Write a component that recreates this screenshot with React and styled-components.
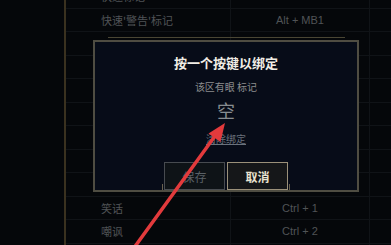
import React from 'react';
import styled, {createGlobalStyle} from 'styled-components';

const GlobalStyle = createGlobalStyle`
  html, body {
    margin: 0;
    padding: 0;
    background: #05070a;
  }
  body {
    font-family: "Noto Sans CJK SC", "Liberation Sans", sans-serif;
  }
`;

const Page = styled.div`
  position: relative;
  width: 391px;
  height: 245px;
  overflow: hidden;
  background: #05070a;
`;

const Table = styled.div`
  margin-top: -15px;
  margin-left: 64px;
  border-left: 2px solid #3a311f;
  height: 300px;
`;

const Row = styled.div`
  display: grid;
  grid-template-columns: 165px 139px 1fr;
  height: 23.5px;
  border-bottom: 1px solid #101317;
  box-sizing: border-box;
`;

const Cell = styled.div`
  display: flex;
  align-items: center;
  justify-content: ${(p) => (p.$center ? 'center' : 'flex-start')};
  padding-left: ${(p) => (p.$center ? '0' : '35px')};
  border-right: 1px solid #101317;
  font-family: ${(p) => (p.$center ? '"Liberation Sans", "Noto Sans CJK SC", sans-serif' : '"Noto Sans CJK SC", "Liberation Sans", sans-serif')};
  font-size: 11px;
  color: #505356;
  white-space: nowrap;
`;

const Modal = styled.div`
  position: absolute;
  left: 93px;
  top: 40px;
  width: 266px;
  height: 152px;
  box-sizing: border-box;
  border: 2px solid #4f4d42;
  background: #070c18;
  display: flex;
  flex-direction: column;
  align-items: center;
  padding-top: 13px;
  &::before {
    content: '';
    position: absolute;
    top: -5px;
    left: 13px;
    right: 12px;
    border-top: 1px solid #4a4634;
  }
`;

const Title = styled.div`
  font-size: 13px;
  line-height: 16px;
  font-weight: 700;
  color: #f1eee6;
`;

const Subtitle = styled.div`
  margin-top: 9px;
  font-size: 10px;
  line-height: 14px;
  color: #8c8d8e;
`;

const KeyValue = styled.div`
  margin-top: 5px;
  font-size: 18px;
  line-height: 22px;
  color: #878c90;
`;

const ClearLink = styled.div`
  margin-top: 11px;
  font-size: 10px;
  line-height: 14px;
  color: #6a727c;
  text-decoration: underline;
`;

const Tray = styled.div`
  position: relative;
  margin-top: auto;
  display: flex;
  gap: 2px;
  padding: 0 2px;
  &::before,
  &::after {
    content: '';
    position: absolute;
    bottom: 0;
    width: 1px;
    height: 6px;
    background: #6a6250;
  }
  &::before { left: 0; }
  &::after { right: 0; }
`;

const Button = styled.div`
  width: 61px;
  height: 28px;
  box-sizing: border-box;
  display: flex;
  align-items: center;
  justify-content: center;
  font-size: 12px;
  font-weight: ${(p) => (p.$primary ? 700 : 400)};
  color: ${(p) => (p.$primary ? '#e8e2cf' : '#596066')};
  background: ${(p) => (p.$primary ? '#151719' : '#0e1317')};
  border: ${(p) => (p.$primary ? '1.5px solid #9b917a' : '1px solid #474b50')};
`;

const Arrow = styled.svg`
  position: absolute;
  left: 0;
  top: 0;
  pointer-events: none;
`;

const rows = [
  ['快速标记', ''],
  ['快速\'警告\'标记', 'Alt + MB1'],
  ['', ''],
  ['快速\'撤退\'标记', 'Alt + MB3'],
  ['快速\'协助\'标记', 'Alt + MB4'],
  ['该区有眼 标记', ''],
  ['该区无眼 标记', ''],
  ['发送聊天', 'Enter'],
  ['全体聊天', 'Shift + Enter'],
  ['笑话', 'Ctrl + 1'],
  ['嘲讽', 'Ctrl + 2'],
  ['', ''],
];

export default function App() {
  return (
    <Page>
      <GlobalStyle />
      <Table>
        {rows.map(([label, key], i) => (
          <Row key={i}>
            <Cell>{label}</Cell>
            <Cell $center>{key}</Cell>
            <Cell />
          </Row>
        ))}
      </Table>

      <Modal>
        <Title>按一个按键以绑定</Title>
        <Subtitle>该区有眼 标记</Subtitle>
        <KeyValue>空</KeyValue>
        <ClearLink>清除绑定</ClearLink>
        <Tray>
          <Button>保存</Button>
          <Button $primary>取消</Button>
        </Tray>
      </Modal>

      <Arrow width="391" height="245" viewBox="0 0 391 245">
        <line x1="131" y1="252" x2="215" y2="136" stroke="#e23a3c" strokeWidth="3.5" strokeLinecap="round" />
        <polygon points="225,123 220.5,142 208.5,133.5" fill="#e23a3c" />
      </Arrow>
    </Page>
  );
}
